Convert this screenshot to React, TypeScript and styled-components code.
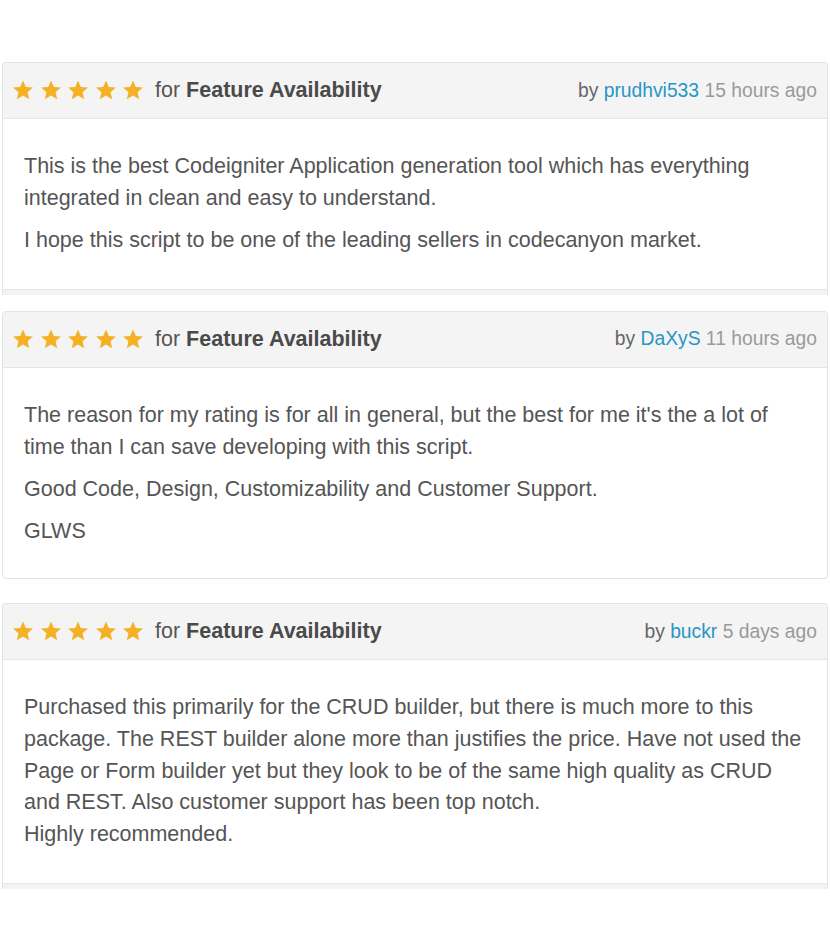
import React from "react";
import styled, { createGlobalStyle } from "styled-components";

const Global = createGlobalStyle`
  html, body { margin: 0; padding: 0; background: #ffffff; }
  body { font-family: "Liberation Sans", Arial, sans-serif; }
`;

const Page = styled.div`
  width: 830px;
  padding: 62px 2px 0 2px;
  box-sizing: border-box;
  display: flex;
  flex-direction: column;
`;

const Card = styled.div<{ $gap: number; $open?: boolean }>`
  margin-bottom: ${(p) => p.$gap}px;
  border: 1px solid #e3e3e3;
  border-bottom: ${(p) => (p.$open ? "none" : "1px solid #e3e3e3")};
  border-radius: ${(p) => (p.$open ? "4px 4px 0 0" : "4px")};
  background: #fff;
  display: flex;
  flex-direction: column;
`;

const Header = styled.div`
  height: 55px;
  background: #f4f4f4;
  border-bottom: 1px solid #e6e6e6;
  border-radius: 4px 4px 0 0;
  display: flex;
  align-items: center;
  justify-content: space-between;
  padding: 0 10px 0 9px;
`;

const Left = styled.div`
  display: flex;
  align-items: center;
`;

const Stars = styled.div`
  display: flex;
  gap: 5.5px;
  margin-right: 11px;
  margin-bottom: 1px;
`;

const ForText = styled.span`
  color: #555;
  font-size: 21.5px;
  b {
    color: #4a4a4a;
    font-weight: bold;
  }
`;

const Meta = styled.div`
  color: #666;
  font-size: 19.3px;
`;

const User = styled.span`
  color: #2996c4;
`;

const Time = styled.span`
  color: #9a9a9a;
`;

const Body = styled.div<{ $pb: number }>`
  padding: 32px 22px ${(p) => p.$pb}px 21px;
  color: #555;
  font-size: 21.5px;
  line-height: 31.75px;
`;

const Para = styled.p`
  margin: 0 0 10.6px 0;
  &:last-child {
    margin-bottom: 0;
  }
`;

const Footer = styled.div`
  height: 5px;
  background: #f3f3f3;
  border-top: 1px solid #e6e6e6;
`;

const Star = () => (
  <svg width="22" height="22" viewBox="0 0 24 24">
    <path
      d="M12 1.5l3.1 7.1 7.7.7-5.8 5.1 1.7 7.6L12 18.1 5.3 22l1.7-7.6L1.2 9.3l7.7-.7z"
      fill="#f4b126"
    />
  </svg>
);

type Review = {
  user: string;
  time: string;
  paras: React.ReactNode[];
  gap: number;
  open?: boolean;
  pb: number;
};

const reviews: Review[] = [
  {
    user: "prudhvi533",
    time: "15 hours ago",
    paras: [
      "This is the best Codeigniter Application generation tool which has everything integrated in clean and easy to understand.",
      "I hope this script to be one of the leading sellers in codecanyon market.",
    ],
    gap: 16,
    open: true,
    pb: 32,
  },
  {
    user: "DaXyS",
    time: "11 hours ago",
    paras: [
      "The reason for my rating is for all in general, but the best for me it's the a lot of time than I can save developing with this script.",
      "Good Code, Design, Customizability and Customer Support.",
      "GLWS",
    ],
    gap: 24,
    pb: 30,
  },
  {
    user: "buckr",
    time: "5 days ago",
    paras: [
      <>
        Purchased this primarily for the CRUD builder, but there is much more to this
        package. The REST builder alone more than justifies the price. Have not used the
        Page or Form builder yet but they look to be of the same high quality as CRUD
        and REST. Also customer support has been top notch.
        <br />
        Highly recommended.
      </>,
    ],
    gap: 0,
    open: true,
    pb: 32,
  },
];

export default function App() {
  return (
    <>
      <Global />
      <Page>
        {reviews.map((r, i) => (
          <Card key={i} $gap={r.gap} $open={r.open}>
            <Header>
              <Left>
                <Stars>
                  {[0, 1, 2, 3, 4].map((s) => (
                    <Star key={s} />
                  ))}
                </Stars>
                <ForText>
                  for <b>Feature Availability</b>
                </ForText>
              </Left>
              <Meta>
                by <User>{r.user}</User> <Time>{r.time}</Time>
              </Meta>
            </Header>
            <Body $pb={r.pb}>
              {r.paras.map((p, j) => (
                <Para key={j}>{p}</Para>
              ))}
            </Body>
            {r.open && <Footer />}
          </Card>
        ))}
      </Page>
    </>
  );
}
